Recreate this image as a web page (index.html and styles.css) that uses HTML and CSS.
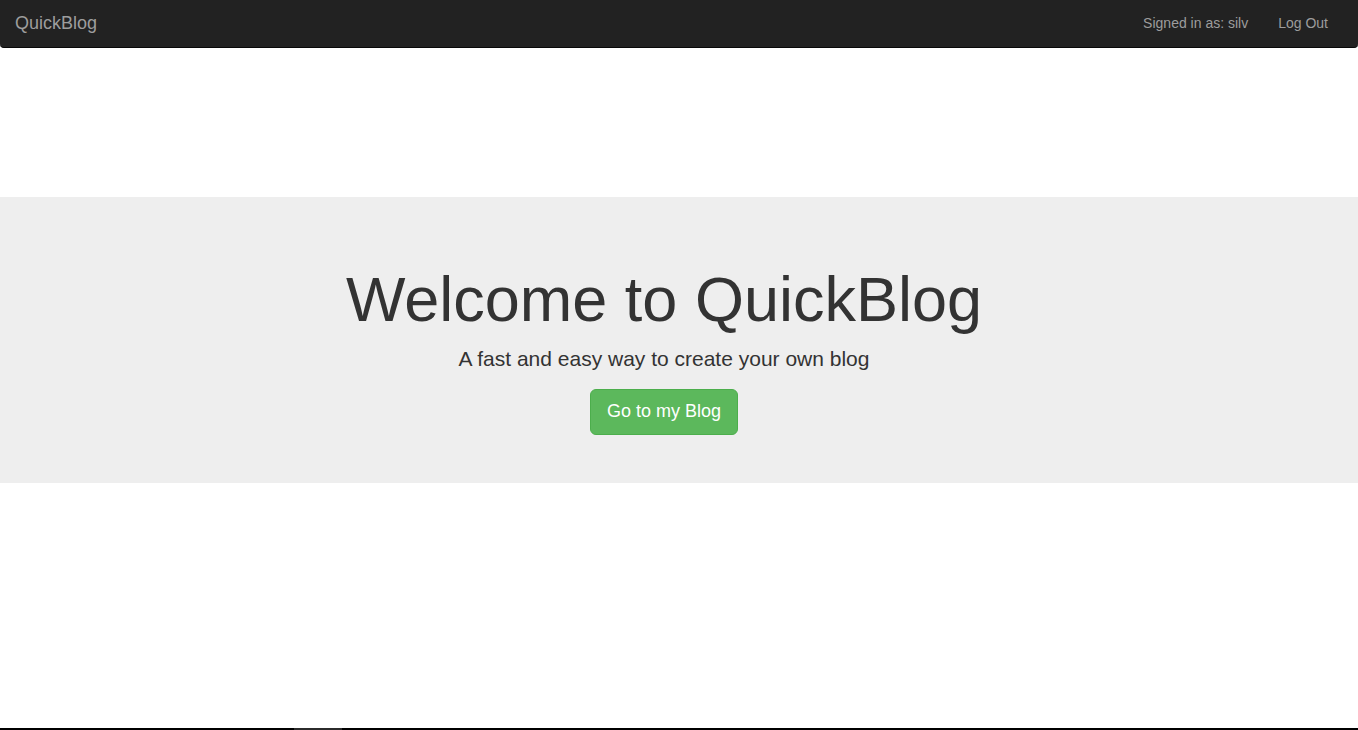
FILE: index.html
```html
<!DOCTYPE html>
<html lang="en">
<head>
<meta charset="utf-8">
<title>QuickBlog</title>
<link rel="stylesheet" href="styles.css">
</head>
<body>
<div class="page">
  <nav class="navbar">
    <a class="brand" href="#">QuickBlog</a>
    <div class="nav-right">
      <span class="nav-text">Signed in as: silv</span>
      <a class="nav-link" href="#">Log Out</a>
    </div>
  </nav>
  <section class="jumbotron">
    <h1 class="title">Welcome to QuickBlog</h1>
    <p class="lead">A fast and easy way to create your own blog</p>
    <a class="btn" href="#">Go to my Blog</a>
  </section>
  <div class="spacer"></div>
  <div class="bottom-bar"><span class="bar-tab"></span></div>
</div>
</body>
</html>
```
FILE: styles.css
```css
html, body {
  margin: 0;
  padding: 0;
  background: #fff;
}
body {
  font-family: "Liberation Sans", Arial, sans-serif;
  font-size: 14px;
  color: #333;
}
.page {
  height: 730px;
  display: flex;
  flex-direction: column;
  overflow: hidden;
}
.navbar {
  height: 48px;
  box-sizing: border-box;
  background: #222;
  border-bottom: 1px solid #080808;
  border-radius: 0 0 4px 4px;
  display: flex;
  align-items: center;
  justify-content: space-between;
  padding: 0 15px;
  flex: none;
}
.brand {
  font-size: 18px;
  line-height: 20px;
  color: #9d9d9d;
  text-decoration: none;
  margin-top: -1px;
}
.nav-right {
  display: flex;
  align-items: center;
  gap: 30px;
  margin-right: 15px;
  margin-top: -1px;
}
.nav-text, .nav-link {
  font-size: 14px;
  line-height: 20px;
  color: #9d9d9d;
  text-decoration: none;
}
.jumbotron {
  margin-top: 149px;
  background: #eee;
  padding: 48px 30px 48px 0;
  display: flex;
  flex-direction: column;
  align-items: center;
  flex: none;
}
.title {
  margin: 20px 0 10px;
  font-size: 63px;
  line-height: 1.1;
  font-weight: 500;
  color: #333;
}
.lead {
  margin: 0 0 15px;
  font-size: 21px;
  line-height: 30px;
  color: #333;
}
.btn {
  display: inline-block;
  font-size: 18px;
  line-height: 1.3333;
  padding: 10px 16px;
  color: #fff;
  background: #5cb85c;
  border: 1px solid #4cae4c;
  border-radius: 6px;
  text-decoration: none;
}
.spacer {
  flex: 1;
  background: #fff;
}
.bottom-bar {
  height: 2px;
  background: #000;
  flex: none;
  display: flex;
}
.bar-tab {
  margin-left: 294px;
  width: 48px;
  height: 2px;
  background: #2b2b2b;
}
```
